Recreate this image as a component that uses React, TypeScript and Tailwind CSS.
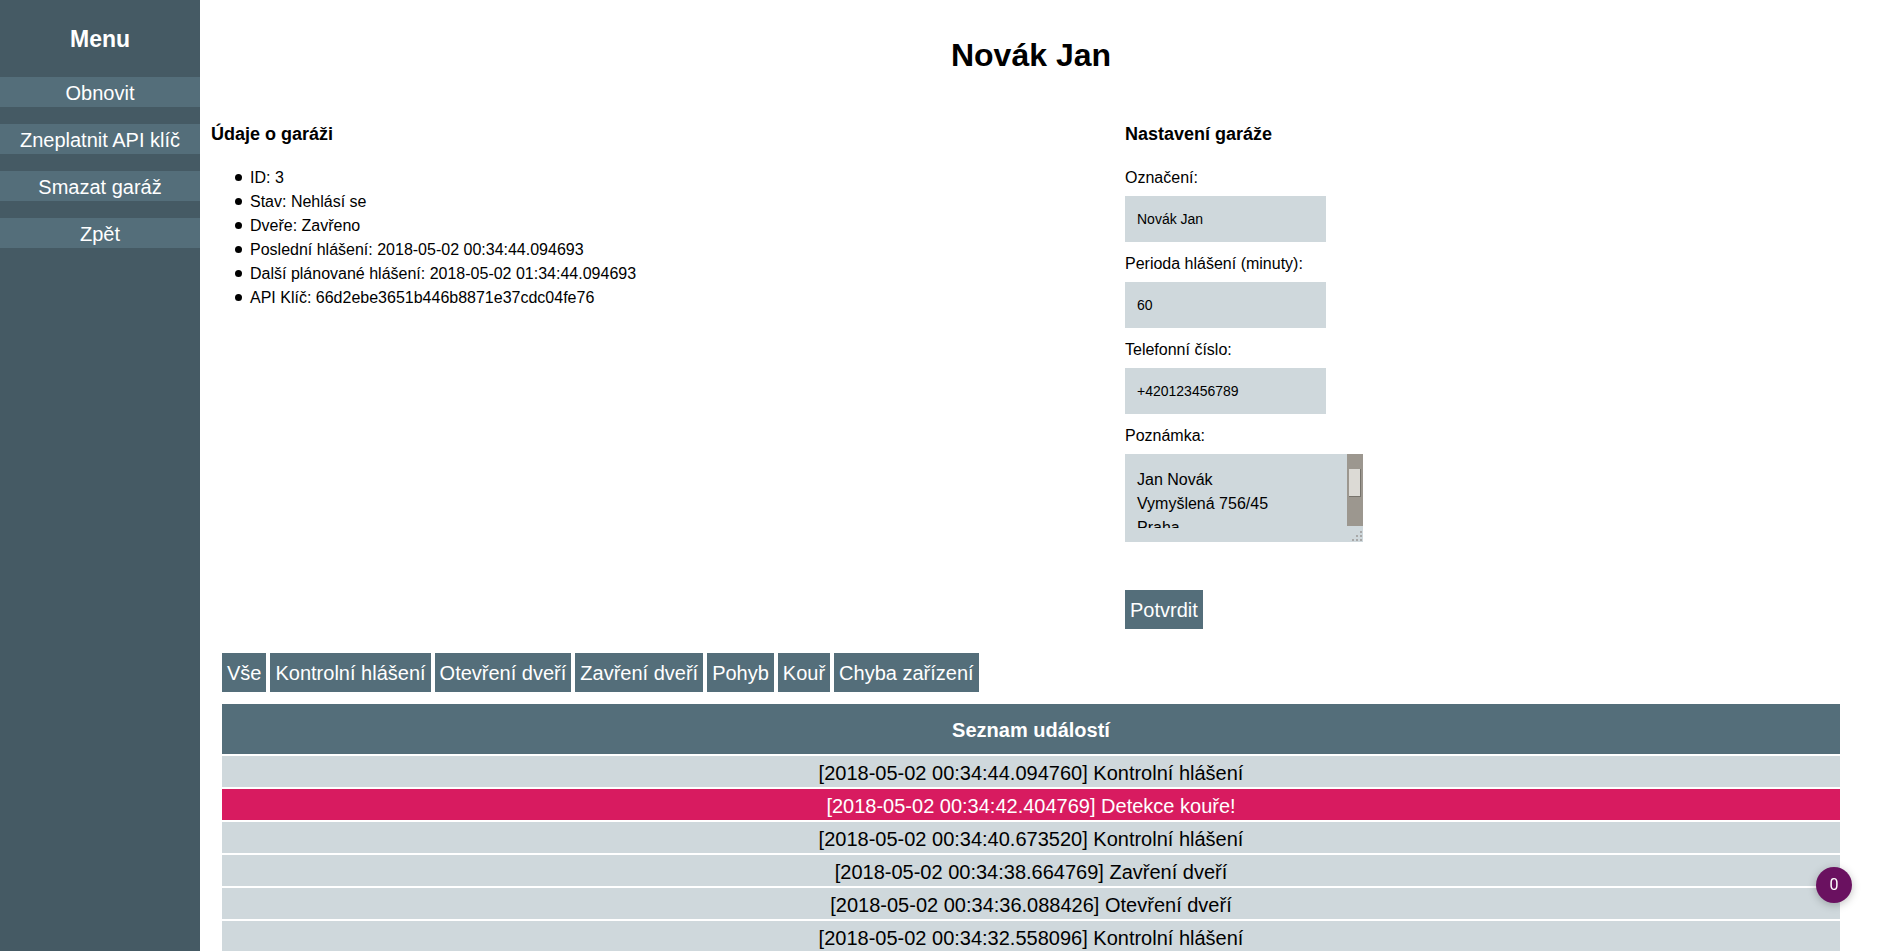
import React, { useState } from 'react';

const menuItems: string[] = ['Obnovit', 'Zneplatnit API klíč', 'Smazat garáž', 'Zpět'];

const garageInfo: string[] = [
  'ID: 3',
  'Stav: Nehlásí se',
  'Dveře: Zavřeno',
  'Poslední hlášení: 2018-05-02 00:34:44.094693',
  'Další plánované hlášení: 2018-05-02 01:34:44.094693',
  'API Klíč: 66d2ebe3651b446b8871e37cdc04fe76',
];

const filters: string[] = [
  'Vše',
  'Kontrolní hlášení',
  'Otevření dveří',
  'Zavření dveří',
  'Pohyb',
  'Kouř',
  'Chyba zařízení',
];

type GarageEvent = { time: string; text: string; alarm?: boolean };

const events: GarageEvent[] = [
  { time: '2018-05-02 00:34:44.094760', text: 'Kontrolní hlášení' },
  { time: '2018-05-02 00:34:42.404769', text: 'Detekce kouře!', alarm: true },
  { time: '2018-05-02 00:34:40.673520', text: 'Kontrolní hlášení' },
  { time: '2018-05-02 00:34:38.664769', text: 'Zavření dveří' },
  { time: '2018-05-02 00:34:36.088426', text: 'Otevření dveří' },
  { time: '2018-05-02 00:34:32.558096', text: 'Kontrolní hlášení' },
];

export default function App() {
  const [label, setLabel] = useState('Novák Jan');
  const [period, setPeriod] = useState('60');
  const [phone, setPhone] = useState('+420123456789');
  const [note, setNote] = useState('Jan Novák\nVymyšlená 756/45\nPraha\n110 00\nČeská republika');

  return (
    <div className="flex min-h-screen font-['Liberation_Sans',Arial,sans-serif] text-black">
      {/* sidebar */}
      <div className="w-[200px] shrink-0 bg-[#455a64] text-white">
        <h3 className="mt-[26px] text-center text-[23px] leading-[26px] font-bold">Menu</h3>
        <div className="mt-[25px] flex flex-col gap-[17px]">
          {menuItems.map((item) => (
            <a key={item} className="block h-[30px] bg-[#546e7a] text-center text-[20px] leading-[32px] text-white">
              {item}
            </a>
          ))}
        </div>
      </div>

      {/* content */}
      <div className="flex-1 pt-[37px] pl-[11px] pr-[27px]">
        <h1 className="text-center text-[32px] leading-[37px] font-bold">{label}</h1>

        <div className="mt-[50px] grid grid-cols-[914px_1fr]">
          <div>
            <h3 className="text-[18px] leading-[21px] font-bold">Údaje o garáži</h3>
            <ul className="mt-[21px] pl-[24px] text-[16px] leading-6">
              {garageInfo.map((row) => (
                <li key={row} className="flex items-center">
                  <span className="mr-[8px] mt-[-1px] h-[7px] w-[7px] shrink-0 rounded-full bg-black" />
                  <span>{row}</span>
                </li>
              ))}
            </ul>
          </div>

          <div>
            <h3 className="text-[18px] leading-[21px] font-bold">Nastavení garáže</h3>
            <form className="mt-[22px] flex flex-col items-start text-[16px]">
              <label htmlFor="label" className="h-[20px] leading-[22px]">Označení:</label>
              <input
                id="label"
                value={label}
                onChange={(e) => setLabel(e.target.value)}
                className="mt-[9px] h-[46px] w-[201px] bg-[#cfd8dc] px-[12px] text-[14px] outline-none"
              />
              <label htmlFor="period" className="mt-[11px] h-[20px] leading-[22px]">Perioda hlášení (minuty):</label>
              <input
                id="period"
                value={period}
                onChange={(e) => setPeriod(e.target.value)}
                className="mt-[9px] h-[46px] w-[201px] bg-[#cfd8dc] px-[12px] text-[14px] outline-none"
              />
              <label htmlFor="phone" className="mt-[11px] h-[20px] leading-[22px]">Telefonní číslo:</label>
              <input
                id="phone"
                value={phone}
                onChange={(e) => setPhone(e.target.value)}
                className="mt-[9px] h-[46px] w-[201px] bg-[#cfd8dc] px-[12px] text-[14px] outline-none"
              />
              <label htmlFor="note" className="mt-[11px] h-[20px] leading-[22px]">Poznámka:</label>
              <div className="relative mt-[9px] h-[88px] w-[238px] bg-[#cfd8dc]">
                <textarea
                  id="note"
                  value={note}
                  onChange={(e) => setNote(e.target.value)}
                  className="block h-[74px] w-[222px] resize-none overflow-hidden bg-transparent pt-[14px] pl-[12px] text-[16px] leading-[24px] outline-none"
                />
                {/* old-style scrollbar + resize grip */}
                <div className="absolute top-0 right-0 h-[72px] w-[16px] bg-[#9c978f]">
                  <div className="mt-[15px] ml-[2px] h-[28px] w-[12px] border-r border-b border-[#77736c] bg-[#dcdad5]" />
                </div>
                <svg className="absolute right-0 bottom-0" width="16" height="16" viewBox="0 0 16 16">
                  {[
                    [13, 5], [13, 9], [9, 9], [13, 13], [9, 13], [5, 13],
                  ].map(([x, y]) => (
                    <rect key={`${x}-${y}`} x={x} y={y} width="2" height="2" fill="#a8a8a8" />
                  ))}
                </svg>
              </div>
              <button
                type="button"
                className="mt-[48px] h-[39px] bg-[#546e7a] px-[5px] text-[20px] leading-[41px] text-white"
              >
                Potvrdit
              </button>
            </form>
          </div>
        </div>

        {/* event filters */}
        <div className="mt-[24px] ml-[11px] flex gap-[4px]">
          {filters.map((f) => (
            <button key={f} className="h-[39px] bg-[#546e7a] px-[5px] text-[20px] leading-[41px] text-white">
              {f}
            </button>
          ))}
        </div>

        {/* event list */}
        <div className="mt-[12px] mx-[11px] flex flex-col gap-[2px] text-center">
          <div className="h-[50px] bg-[#546e7a] text-[20px] leading-[52px] font-bold text-white">Seznam událostí</div>
          {events.map((ev) => (
            <div
              key={ev.time}
              className={ev.alarm ? 'h-[31px] bg-[#d81b60] text-[20px] leading-[35px] text-white' : 'h-[31px] bg-[#cfd8dc] text-[20px] leading-[35px] text-black'}
            >
              [{ev.time}] {ev.text}
            </div>
          ))}
        </div>
      </div>

      <div className="fixed right-[26px] bottom-[48px] flex h-[36px] w-[36px] items-center justify-center rounded-full bg-[#6a1160] font-['Roboto',sans-serif] text-[16px] text-white shadow-[0_2px_8px_rgba(0,0,0,0.25)]">
        0
      </div>
    </div>
  );
}
